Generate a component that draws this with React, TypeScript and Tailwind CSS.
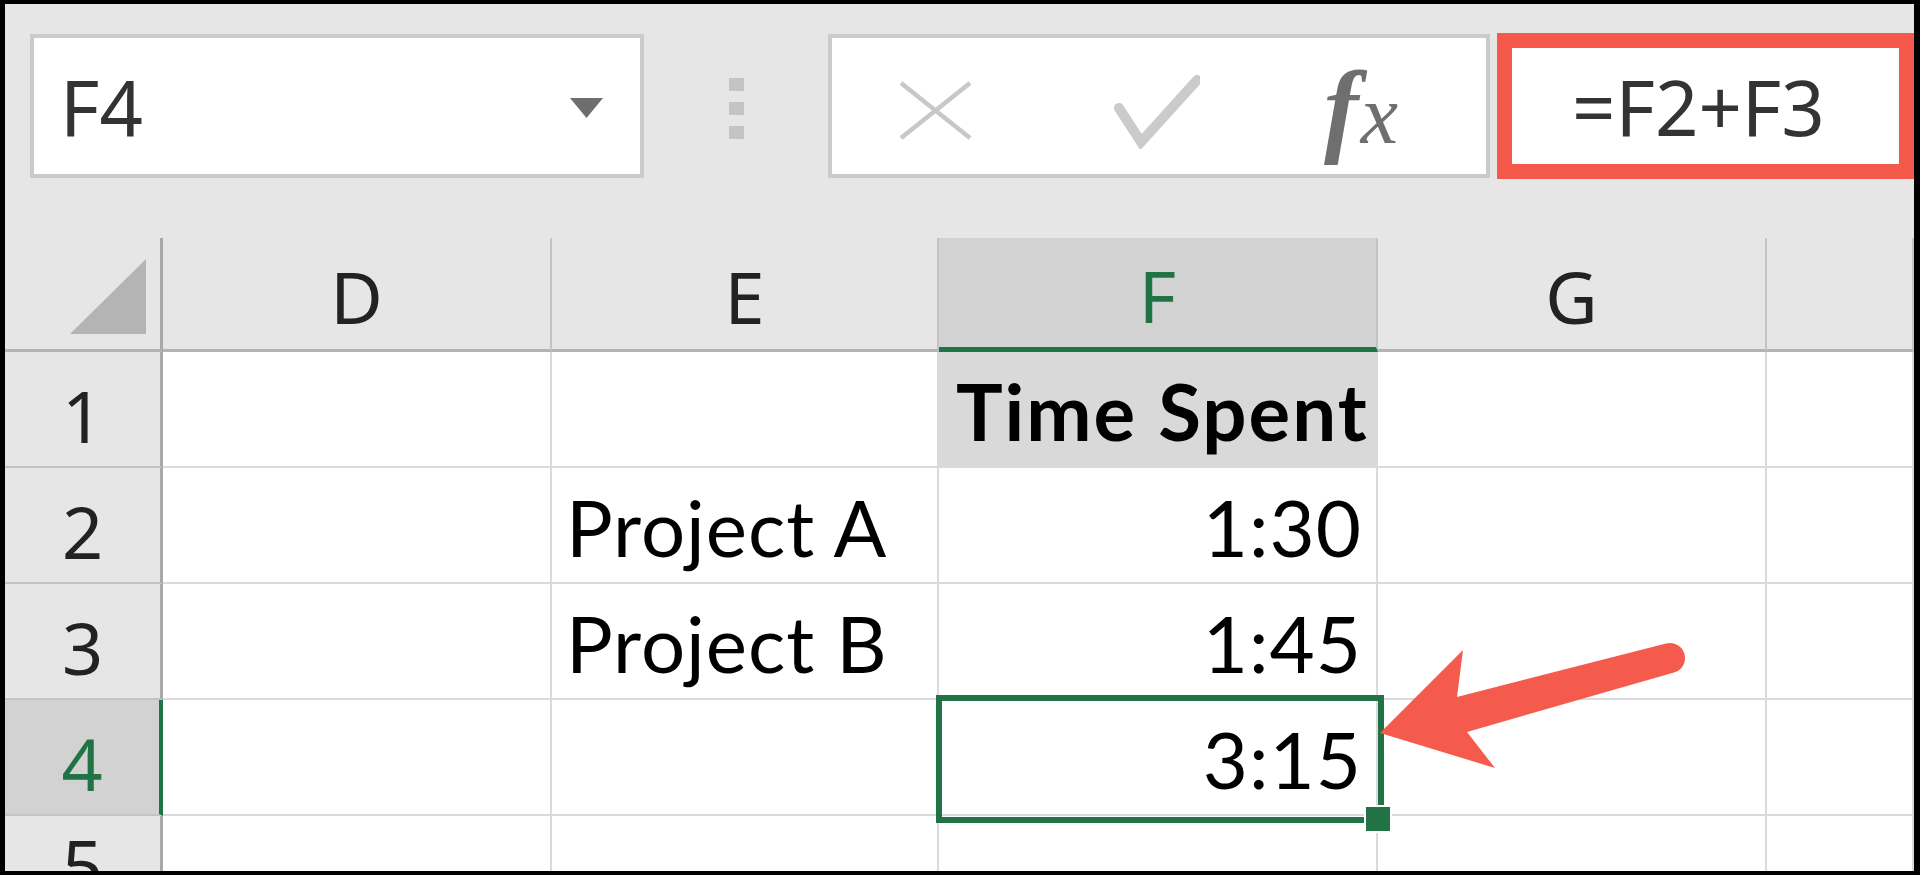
import type { ReactNode } from "react";

interface SheetRow {
  n: string;
  e: string;
  f: string;
}

const rows: SheetRow[] = [
  { n: "1", e: "", f: "Time Spent" },
  { n: "2", e: "Project A", f: "1:30" },
  { n: "3", e: "Project B", f: "1:45" },
  { n: "4", e: "", f: "3:15" },
  { n: "5", e: "", f: "" },
];

const columns = ["D", "E", "F", "G", ""];

const NameBox = () => (
  <div className="ml-[25px] flex h-[144px] w-[614px] items-center justify-between border-4 border-[#cbcbcb] bg-white pl-[26px] pr-[37px]">
    <span className="pt-[2px] font-['Noto_Sans',sans-serif] text-[76px] leading-none text-[#333]">
      F4
    </span>
    <svg width="33" height="20" viewBox="0 0 33 20" className="mt-[3px]">
      <polygon points="0,0 33,0 16.5,20" fill="#6e6e6e" />
    </svg>
  </div>
);

const Grip = () => (
  <div className="ml-[85px] flex w-[15px] flex-col gap-[11px] pt-[4px]">
    <div className="h-[13px] w-[15px] bg-[#c4c4c4]" />
    <div className="h-[13px] w-[15px] bg-[#c4c4c4]" />
    <div className="h-[13px] w-[15px] bg-[#c4c4c4]" />
  </div>
);

const FormulaButtons = () => (
  <div className="ml-[84px] flex h-[144px] w-[662px] items-center border-4 border-[#cbcbcb] bg-white">
    <svg width="75" height="61" viewBox="0 0 75 61" className="ml-[66px] mt-[8px]">
      <path d="M3 3 L72 58 M72 3 L3 58" stroke="#c8c8c8" strokeWidth="4.5" />
    </svg>
    <svg width="86" height="74" viewBox="0 0 86 74" className="ml-[141px] mt-[12px]">
      <polyline
        points="5,33 27,67 83,5"
        fill="none"
        stroke="#cbcbcb"
        strokeWidth="10"
        strokeLinecap="round"
        strokeLinejoin="miter"
      />
    </svg>
    <div className="ml-[124px] flex items-baseline pt-[4px] font-['Liberation_Serif',serif] italic leading-none text-[#6f6f6f]">
      <span className="text-[104px] font-bold">f</span>
      <span className="ml-[2px] text-[84px]">x</span>
    </div>
  </div>
);

const FormulaInput = () => (
  <div className="-mt-[1px] ml-[7px] flex h-[146px] flex-1 items-center border-[15px] border-[#f4594b] bg-white pl-[60px]">
    <span className="pt-[2px] font-['Noto_Sans',sans-serif] text-[76px] leading-none text-[#333]">
      =F2+F3
    </span>
  </div>
);

const ColumnHeader = ({ label }: { label: string }) => {
  const active = label === "F";
  return (
    <div
      className={
        active
          ? "flex items-center justify-center border-b-[5px] border-r-2 border-b-[#217346] border-r-[#c4c4c4] bg-[#d2d2d2] pt-[4px]"
          : "flex items-center justify-center border-b-[3px] border-r-2 border-b-[#b4b4b4] border-r-[#c4c4c4] bg-[#e6e6e6] pt-[4px]"
      }
    >
      <span
        className={
          active
            ? "font-['Noto_Sans',sans-serif] text-[72px] leading-none text-[#217346]"
            : "font-['Noto_Sans',sans-serif] text-[72px] leading-none text-[#222]"
        }
      >
        {label}
      </span>
    </div>
  );
};

const RowHeader = ({ n }: { n: string }) => {
  const active = n === "4";
  return (
    <div
      className={
        active
          ? "flex items-center justify-center border-b-2 border-r-4 border-b-[#c4c4c4] border-r-[#217346] bg-[#d2d2d2] pt-[12px]"
          : "flex items-center justify-center border-b-2 border-r-[3px] border-b-[#c4c4c4] border-r-[#a8a8a8] bg-[#e6e6e6] pt-[12px]"
      }
    >
      <span
        className={
          active
            ? "font-['Noto_Sans',sans-serif] text-[72px] leading-none text-[#217346]"
            : "font-['Noto_Sans',sans-serif] text-[72px] leading-none text-[#222]"
        }
      >
        {n}
      </span>
    </div>
  );
};

const Cell = ({ children, className = "" }: { children?: ReactNode; className?: string }) => (
  <div
    className={`flex items-end border-b-2 border-r-2 border-[#dadada] pb-[16px] font-['Lato',sans-serif] text-[78px] leading-none tracking-[1px] text-black ${className}`}
  >
    {children}
  </div>
);

// green outline + fill handle drawn over the active cell
const Selection = () => (
  <>
    <div className="absolute -left-[3px] -top-[5px] z-10 h-[128px] w-[448px] border-[6px] border-[#217346]" />
    <div className="absolute left-[425px] top-[105px] z-20 h-[28px] w-[28px] border-2 border-white bg-[#217346]" />
  </>
);

export default function App() {
  return (
    <div className="relative h-[875px] w-[1920px] overflow-hidden bg-black pb-[4px] pl-[5px] pr-[6px] pt-[4px]">
      <div className="flex h-full flex-col overflow-hidden bg-[#e6e6e6]">
        <div className="flex h-[234px] shrink-0 items-start pt-[30px]">
          <NameBox />
          <div className="flex h-[144px] items-center">
            <Grip />
          </div>
          <FormulaButtons />
          <FormulaInput />
        </div>

        <div className="grid grid-cols-[158px_389px_387px_439px_389px_1fr] grid-rows-[114px_116px_116px_116px_116px]">
          <div className="flex items-end justify-end border-b-[3px] border-r-[3px] border-b-[#b4b4b4] border-r-[#a8a8a8] bg-[#e6e6e6] pb-[15px] pr-[14px]">
            <svg width="76" height="75" viewBox="0 0 76 75">
              <polygon points="76,0 76,75 0,75" fill="#b4b4b4" />
            </svg>
          </div>
          {columns.map((c, i) => (
            <ColumnHeader key={i} label={c} />
          ))}

          {rows.map((r) => (
            <div key={r.n} className="contents">
              <RowHeader n={r.n} />
              <Cell className="bg-white" />
              <Cell className="bg-white pl-[14px]">{r.e}</Cell>
              {r.n === "1" ? (
                <Cell className="bg-[#d9d9d9] pl-[17px] font-bold tracking-[2px]">{r.f}</Cell>
              ) : (
                <Cell className="relative justify-end bg-white pr-[14px]">
                  {r.f}
                  {r.n === "4" && <Selection />}
                </Cell>
              )}
              <Cell className="bg-white" />
              <Cell className="bg-white" />
            </div>
          ))}
        </div>
      </div>

      <svg
        className="pointer-events-none absolute left-0 top-0 z-30"
        width="1920"
        height="875"
        viewBox="0 0 1920 875"
      >
        <path
          d="M1380 733 L1463 650 L1457 697 L1666 643.5 A15 15 0 0 1 1674 672.5 L1467 732 L1495 768 Z"
          fill="#f45b4d"
        />
      </svg>
    </div>
  );
}
